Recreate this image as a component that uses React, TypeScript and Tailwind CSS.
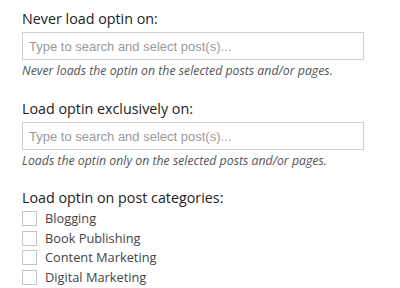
const categories = ['Blogging', 'Book Publishing', 'Content Marketing', 'Digital Marketing'];

function PostField({ label, help, className }: { label: string; help: string; className?: string }) {
  return (
    <div className={className}>
      <label className="block text-[14.3px] leading-[20px] text-[#222]">{label}</label>
      <input
        type="text"
        placeholder="Type to search and select post(s)..."
        className="mt-[3px] block h-[28px] w-[342px] border border-[#cfcfcf] bg-white px-[6px] font-['Liberation_Sans',Arial,sans-serif] text-[13px] text-[#333] outline-none placeholder:text-[#9a9a9a]"
      />
      <p className="mt-[3px] text-[12.3px] leading-[16px] italic text-[#555]">{help}</p>
    </div>
  );
}

export default function App() {
  return (
    <div className="min-h-screen bg-white px-[22px] pt-[9px] font-['Open_Sans',sans-serif]">
      <PostField
        label="Never load optin on:"
        help="Never loads the optin on the selected posts and/or pages."
      />
      <PostField
        className="mt-[20px]"
        label="Load optin exclusively on:"
        help="Loads the optin only on the selected posts and/or pages."
      />
      <div className="mt-[19px]">
        <div className="text-[14.3px] leading-[20px] text-[#222]">Load optin on post categories:</div>
        <ul className="mt-[1px]">
          {categories.map((cat) => (
            <li key={cat} className="flex h-[19.5px] items-center">
              <span className="h-[15px] w-[15px] border border-[#c4c4c4] bg-white" />
              <span className="ml-[8px] text-[12.8px] leading-[19px] text-[#444]">{cat}</span>
            </li>
          ))}
        </ul>
      </div>
    </div>
  );
}
